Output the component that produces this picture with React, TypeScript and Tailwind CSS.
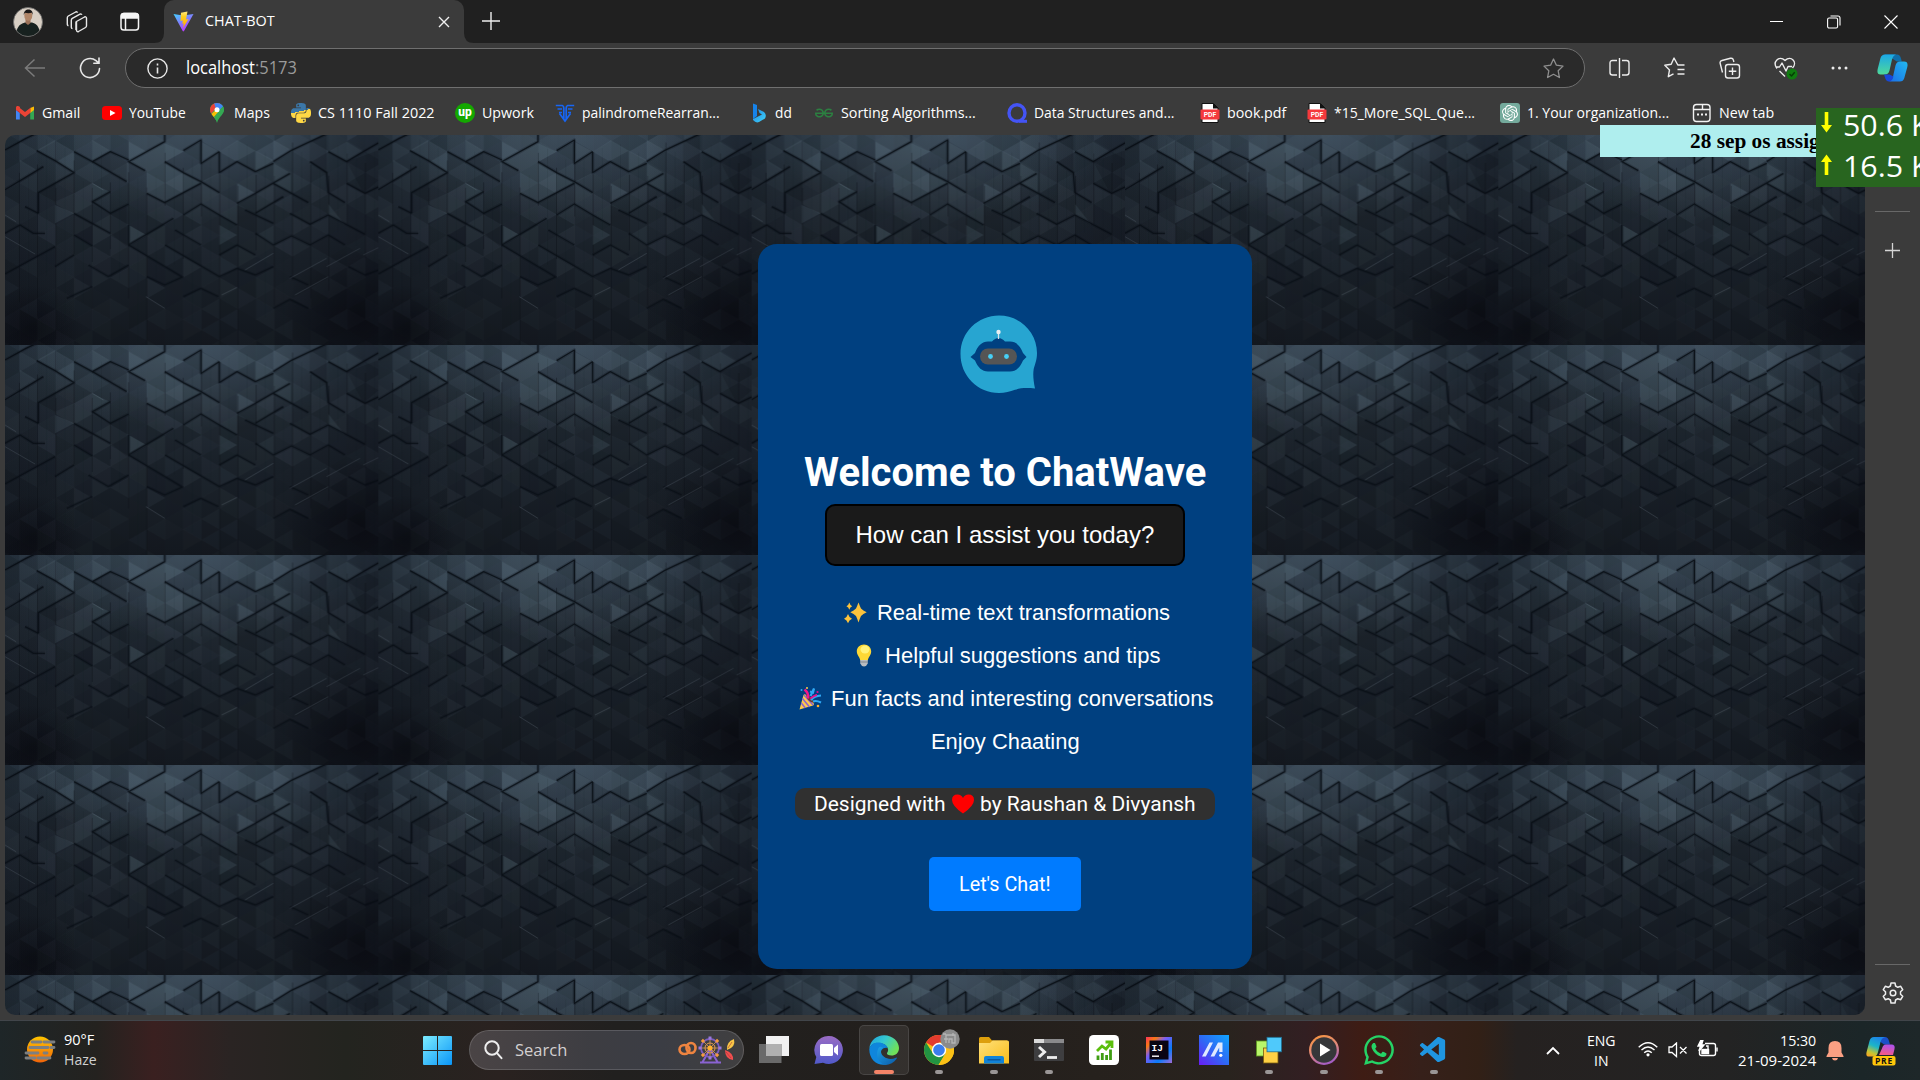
import { useLayoutEffect, useRef } from "react";
import type { ReactNode } from "react";
import { FaWhatsapp } from "react-icons/fa";
import { SiPython, SiGeeksforgeeks, SiOpenai } from "react-icons/si";
import { VscVscode } from "react-icons/vsc";

/* Single-line label condensed or widened to an exact advance width. */
function Fit({ w, className = "", children }: { w: number; className?: string; children: ReactNode }) {
  const inner = useRef<HTMLSpanElement>(null);
  useLayoutEffect(() => {
    const el = inner.current;
    if (el && el.offsetWidth) el.style.transform = `scaleX(${w / el.offsetWidth})`;
  }, [w]);
  return (
    <span className={`block shrink-0 whitespace-pre ${className}`} style={{ width: w }}>
      <span ref={inner} className="inline-block origin-left">{children}</span>
    </span>
  );
}

/* ---------- page wallpaper ---------- */

const CREASES = [
  "15,60 78,25 110,10", "10,182 130,110", "110,62 165,92 222,128 115,188 115,250", "222,65 277,95 331,65 386,90",
  "277,95 380,155", "435,122 386,95 440,65 494,35 494,10", "494,95 550,128 603,155 658,188", "440,190 494,218 603,160",
  "550,62 603,30 603,100 658,65", "658,65 658,128 711,95 766,125 820,100", "711,220 766,190 870,130",
  "820,95 873,62 930,35 980,12", "930,95 980,128 985,188 1035,218", "985,65 1040,95 1090,65 1160,25",
  "820,160 925,218", "766,250 850,200", "735,240 820,280", "331,185 277,215 331,250 386,222", "222,250 331,310",
  "75,230 115,250", "15,310 60,285 100,310 135,310", "222,315 277,348", "386,285 386,345 520,265", "550,255 603,222 658,255 711,285",
  "386,345 545,440", "525,300 603,345", "495,345 658,440 711,415 766,435 820,410", "766,310 820,345 875,318 930,345 985,315 1035,345",
  "870,250 930,283 985,255 1095,313", "658,375 711,345 766,375", "15,432 165,350", "165,410 222,375", "265,405 325,440 386,405",
  "200,505 277,470", "550,500 603,475 655,500", "440,440 494,465 550,440", "870,440 925,465", "820,535 870,508 925,535",
  "1045,410 1095,435 1137,420", "1040,160 1095,190 1137,170",
];
const GLINTS = [
  "15,255 48,275", "15,320 105,372", "980,410 1080,355", "885,495 985,440", "870,445 980,385", "438,500 494,535",
  "665,495 711,472", "1137,255 1170,275", "1090,375 1137,352", "735,420 820,370", "277,160 310,180",
];
/* Raised facets that catch the light near the top edge. */
const LIT = [
  "165,30 165,92 112,60", "277,30 277,92 331,62", "386,35 386,95 440,65", "222,65 222,125 170,95", "386,95 440,65 440,122",
  "603,35 603,100 658,65", "711,30 711,92 766,62", "658,65 711,32 711,95", "766,62 820,90 766,125", "820,30 820,90 873,60",
  "985,65 1040,35 1040,93", "1040,35 1040,93 1090,65", "494,40 494,95 550,65", "494,100 494,215 600,158", "440,65 494,38 494,215 440,188",
  "820,100 873,130 820,160", "277,160 277,215 331,187", "165,225 165,280 222,250", "60,90 60,150 110,120", "820,160 873,190 873,132",
  "386,285 386,340 435,313", "985,222 985,255 1035,285", "711,160 711,218 766,190", "658,285 658,345 711,315",
];
const SHADED = [
  "222,128 115,188 165,215 222,190", "277,95 331,65 380,95 380,155", "603,100 658,70 658,128 603,155", "930,35 980,15 980,128 930,95",
  "1040,95 1137,60 1137,150 1090,190", "331,250 380,225 380,350 331,310", "222,250 277,280 277,348 222,315", "711,225 766,250 766,310 711,285",
];
const rand = (n: number) => {
  const s = Math.sin(n * 127.1 + 11.7) * 43758.5453;
  return s - Math.floor(s);
};
const COL = 54.65;
const facets: { pts: string; light: boolean; a: number }[] = [];
for (let c = -1; c < 21; c++) {
  for (let r = -1; r < 11; r++) {
    for (let k = 0; k < 2; k++) {
      const x0 = 43 + c * COL;
      const x1 = x0 + COL;
      const y = 18 + r * 63 + (c % 2 ? 31.5 : 0) + k * 31.5;
      const v = rand(c * 53 + r * 7 + k * 3 + 400);
      facets.push({
        pts: k ? `${x0},${y + 31.5} ${x1},${y} ${x1},${y + 63}` : `${x0},${y} ${x1},${y + 31.5} ${x0},${y + 63}`,
        light: v > 0.55,
        a: Math.abs(v - 0.55) * (1 - r * 0.075) * 0.24,
      });
    }
  }
}

function Wallpaper() {
  return (
    <svg className="absolute inset-0 h-full w-full" aria-hidden="true">
      <defs>
        <linearGradient id="wpBase" x1="0" y1="0" x2="0" y2="1">
          <stop offset="0" stopColor="#2b3844" />
          <stop offset="0.3" stopColor="#222b34" />
          <stop offset="0.6" stopColor="#1a2129" />
          <stop offset="1" stopColor="#13181f" />
        </linearGradient>
        <linearGradient id="wpSide" x1="0" y1="0" x2="1" y2="0">
          <stop offset="0" stopColor="#060810" stopOpacity="0.2" />
          <stop offset="0.2" stopColor="#060810" stopOpacity="0" />
          <stop offset="0.7" stopColor="#060810" stopOpacity="0" />
          <stop offset="1" stopColor="#060810" stopOpacity="0.3" />
        </linearGradient>
        <radialGradient id="wpShine">
          <stop offset="0" stopColor="#56697a" stopOpacity="0.4" />
          <stop offset="1" stopColor="#56697a" stopOpacity="0" />
        </radialGradient>
        <radialGradient id="wpDark">
          <stop offset="0" stopColor="#07080e" stopOpacity="0.65" />
          <stop offset="1" stopColor="#07080e" stopOpacity="0" />
        </radialGradient>
        <linearGradient id="wpCrease" gradientUnits="userSpaceOnUse" x1="0" y1="0" x2="0" y2="630">
          <stop offset="0" stopColor="#060c12" stopOpacity="0.85" />
          <stop offset="1" stopColor="#060c12" stopOpacity="0.5" />
        </linearGradient>
        <pattern id="wpTile" width="373.333" height="210" patternUnits="userSpaceOnUse">
          <rect width="374" height="210" fill="url(#wpBase)" />
          <ellipse cx="190" cy="0" rx="170" ry="85" fill="url(#wpShine)" />
          <ellipse cx="28" cy="195" rx="50" ry="45" fill="url(#wpDark)" />
          <ellipse cx="355" cy="180" rx="75" ry="65" fill="url(#wpDark)" />
          <g transform="scale(0.33333)">
            {facets.map((f, i) => (
              <polygon key={i} points={f.pts} fill={f.light ? "#7f95a8" : "#03060a"} fillOpacity={f.a} />
            ))}
            {Array.from({ length: 42 }, (_, i) => (
              <path key={i} d={`M${43 + i * (COL / 2)} ${rand(i) * 160}v${150 + rand(i + 90) * 380}`} stroke="#05090e" strokeWidth={i % 2 ? 2 : 3} strokeOpacity={i % 2 ? 0.14 : 0.36} />
            ))}
          </g>
          <g transform="scale(0.33333) translate(-15 -15)" fill="none" strokeLinejoin="round">
            {LIT.map((p) => (
              <polygon key={p} points={p} fill="#7c93a6" fillOpacity="0.14" />
            ))}
            {SHADED.map((p) => (
              <polygon key={p} points={p} fill="#03060a" fillOpacity="0.17" />
            ))}
            {CREASES.map((p) => (
              <g key={p}>
                <polyline points={p} stroke="#060c12" strokeWidth="11" strokeOpacity="0.2" />
                <polyline points={p} stroke="url(#wpCrease)" strokeWidth="4" />
              </g>
            ))}
            {GLINTS.map((p) => (
              <polyline key={p} points={p} stroke="#8a99a5" strokeWidth="2" strokeOpacity="0.32" />
            ))}
          </g>
          <rect width="374" height="210" fill="url(#wpSide)" />
        </pattern>
      </defs>
      <rect width="100%" height="100%" fill="url(#wpTile)" />
    </svg>
  );
}

/* ---------- browser chrome ---------- */

function Avatar() {
  return (
    <svg width="30" height="30" viewBox="0 0 30 30">
      <defs><clipPath id="av"><circle cx="15" cy="15" r="14.5" /></clipPath></defs>
      <g clipPath="url(#av)">
        <rect width="30" height="30" fill="#d8cfc4" />
        <path d="M3 30c0-9 3-13 9-14.500h7c6 1.500 8 6 8 14.500z" fill="#17211f" />
        <path d="M12.500 12h5v4l-2.500 2-2.500-2z" fill="#9b7158" />
        <ellipse cx="15.300" cy="8.500" rx="4" ry="5.300" fill="#b08567" />
        <path d="M10.800 8c-.6-7 9.600-7.500 9 0l-1-2.200c-2.500.6-5 .4-7 0z" fill="#1b1817" />
      </g>
      <circle cx="15" cy="15" r="14.500" fill="none" stroke="#6b6b6b" strokeWidth="0.800" />
    </svg>
  );
}

function TabStrip() {
  return (
    <div className="flex h-[43px] items-stretch bg-[#202020] text-white">
      <div className="flex w-[164px] items-center pl-[13px]">
        <Avatar />
        <svg className="ml-[23px]" width="22" height="22" viewBox="0 0 22 22" fill="none" stroke="#e8e8e8" strokeWidth="1.400" strokeLinejoin="round">
          <path d="M10.500 10.500l8-4.500c1-.5 2 .1 2 1.200v7.500c0 .8-.4 1.400-1 1.800l-7 4c-1 .5-2-.1-2-1.200z" />
          <path d="M10.500 10.500q-.3 0-.5 1v7.500" />
          <path d="M6.500 17.500c-.8 0-1.200-.5-1.200-1.200V9.200c0-.8.400-1.400 1-1.800L14 3.200c.8-.4 1.600-.1 1.900.6" />
          <path d="M2.500 14.500c-.8 0-1.200-.5-1.200-1.200V6.800c0-.8.400-1.400 1-1.800L9.700 1c.8-.4 1.600-.1 1.900.6" />
        </svg>
        <svg className="ml-[32px]" width="20" height="20" viewBox="0 0 20 20" fill="none" stroke="#f5f5f5" strokeWidth="1.500">
          <rect x="1" y="1.500" width="17.500" height="16.500" rx="2.800" />
          <path d="M1.500 6V4q0-2.500 2.500-2.500h11.500q2.500 0 2.500 2.500v2z" fill="#f5f5f5" />
          <path d="M5.500 6v12" />
        </svg>
      </div>
      <div className="relative flex w-[300px] items-center rounded-t-[10px] bg-[#3b3b3b] pl-[9px]">
        <svg className="absolute -left-2.5 bottom-0" width="10" height="10"><path d="M10 0v10H0Q10 10 10 0z" fill="#3b3b3b" /></svg>
        <svg className="absolute -right-2.5 bottom-0" width="10" height="10"><path d="M0 0v10h10Q0 10 0 0z" fill="#3b3b3b" /></svg>
        <svg width="21" height="21" viewBox="0 0 21 21">
          <defs>
            <linearGradient id="vite" x1="0" y1="0" x2="0.600" y2="1"><stop stopColor="#41d1ff" /><stop offset="1" stopColor="#bd34fe" /></linearGradient>
            <linearGradient id="bolt" x1="0" y1="0" x2="0" y2="1"><stop stopColor="#ffea83" /><stop offset="0.300" stopColor="#ffcf20" /><stop offset="1" stopColor="#ffa800" /></linearGradient>
          </defs>
          <path d="M.5 3l9.500 1.500L20.500 3 11 20q-.7.900-1.300 0z" fill="url(#vite)" />
          <path d="M14.500.500L8 1.800 7.500 10l2.300-.5-.5 3.300 1.500-.4-.8 4.600L15.500 8l-2.500.5z" fill="url(#bolt)" />
        </svg>
        <Fit w={70} className="-mt-[2px] ml-[11px] text-[15px]">CHAT-BOT</Fit>
        <svg className="absolute left-[274px] top-[16px]" width="12" height="12" viewBox="0 0 12 12" stroke="#f0f0f0" strokeWidth="1.400"><path d="M1 1l10 10M11 1L1 11" /></svg>
      </div>
      <svg className="mt-[12px] ml-[18px]" width="18" height="18" viewBox="0 0 18 18" stroke="#eee" strokeWidth="1.400"><path d="M9 0v18M0 9h18" /></svg>
      <div className="ml-auto flex items-center pr-[22px]">
        <svg width="13" height="13" viewBox="0 0 13 13" stroke="#fff"><path d="M0 6.500h13" /></svg>
        <svg className="ml-[44px]" width="14" height="14" viewBox="0 0 14 14" fill="none" stroke="#fff" strokeWidth="1.100"><rect x=".6" y="3" width="10" height="10" rx="1.500" /><path d="M3.500 1h7.500q2 0 2 2v7.500" /></svg>
        <svg className="ml-[43px]" width="14" height="14" viewBox="0 0 14 14" stroke="#fff" strokeWidth="1.100"><path d="M.5.500l13 13M13.500.500L.5 13.500" /></svg>
      </div>
    </div>
  );
}

function AddressBar() {
  return (
    <div className="relative flex h-[50px] items-center bg-[#3b3b3b]">
      <svg className="ml-[24px]" width="22" height="20" viewBox="0 0 22 20" fill="none" stroke="#7b7b7b" strokeWidth="1.500"><path d="M21 10H1.500M10.500 1.500L1.500 10l9 8.500" /></svg>
      <svg className="ml-[33px]" width="22" height="22" viewBox="0 0 22 22" fill="none" stroke="#e6e6e6" strokeWidth="1.600" strokeLinecap="round"><path d="M20.500 11.500A9.500 9.500 0 1 1 17 3.700l2.500 2.100M20 1v5.200h-5.200" /></svg>
      <div className="ml-[24px] flex h-[40px] w-[1460px] items-center rounded-full border border-[#6f6f6f] bg-[#2a2a2a] pl-[21px]">
        <svg width="21" height="21" viewBox="0 0 21 21" fill="none" stroke="#e8e8e8" strokeWidth="1.400"><circle cx="10.500" cy="10.500" r="9.600" /><path d="M10.500 9.500v6M10.500 5.500v2" strokeWidth="1.600" /></svg>
        <Fit w={111} className="-mt-px ml-[18px] text-[17.500px] text-white"><span>localhost</span><span className="text-[#9a9a9a]">:5173</span></Fit>
        <svg className="mr-[20px] ml-auto" width="21" height="21" viewBox="0 0 21 21" fill="none" stroke="#8f8f8f" strokeWidth="1.300" strokeLinejoin="round"><path d="M10.500 1l2.900 6.200 6.600.9-4.800 4.700 1.200 6.700-5.900-3.200-5.900 3.200 1.200-6.700L1 8.100l6.600-.9z" /></svg>
      </div>
      <div className="flex flex-1 items-center text-[#ececec]">
        <svg className="ml-[24px] shrink-0" width="21" height="22" viewBox="0 0 21 22" fill="none" stroke="currentColor" strokeWidth="1.400"><path d="M8 3.500H3.500Q1 3.500 1 6v9.500Q1 18 3.500 18H8M13 3.500h4.500Q20 3.500 20 6v9.500q0 2.500-2.500 2.500H13M10.500 1v20" /></svg>
        <svg className="ml-[34px] shrink-0" width="22" height="22" viewBox="0 0 22 22" fill="none" stroke="currentColor" strokeWidth="1.400" strokeLinejoin="round"><path d="M20.500 8h-6.700L10 1 7.200 7.300.8 8.200l4.700 4.700-1.200 6.800 5.200-2.800M13.500 12.500h7M13.500 17h7" /></svg>
        <svg className="ml-[33px] shrink-0" width="22" height="22" viewBox="0 0 22 22" fill="none" stroke="currentColor" strokeWidth="1.400"><path d="M3.500 15.500L1.200 6.500q-.6-2.400 1.800-3l8.400-2.200q2.400-.6 3 1.800l.5 1.900" /><rect x="6.500" y="7.500" width="14" height="13.500" rx="2.500" /><path d="M13.500 10.500v7.500M9.800 14.200h7.500" /></svg>
        <svg className="ml-[33px] shrink-0" width="24" height="24" viewBox="0 0 24 24" fill="none" stroke="currentColor" strokeWidth="1.400" strokeLinejoin="round"><path d="M3 12.500C-2 6 5-1 11 4.500 17-1 24 6 18.500 12M5.500 15l5.500 5.500M1.500 11h4l2.500-4 4 8 2-4.500h4" /><circle cx="18" cy="18" r="5.500" fill="#107c10" stroke="none" /><path d="M15.500 18l2 2 3.200-3.800" stroke="#063d06" /></svg>
        <svg className="ml-[33px] shrink-0" width="17" height="4" viewBox="0 0 17 4" fill="currentColor"><circle cx="2" cy="2" r="1.500" /><circle cx="8.500" cy="2" r="1.500" /><circle cx="15" cy="2" r="1.500" /></svg>
        <svg className="ml-[29px] shrink-0" width="31" height="28" viewBox="0 0 31 28">
          <defs>
            <linearGradient id="cpA" x1="0" y1="0" x2="0" y2="1"><stop stopColor="#1ba8e8" /><stop offset="1" stopColor="#4fd99a" /></linearGradient>
            <linearGradient id="cpB" x1="1" y1="0" x2="0" y2="1"><stop stopColor="#22b8ee" /><stop offset="1" stopColor="#1a6fe8" /></linearGradient>
          </defs>
          <path d="M7 .500h13q3 0 4 4l.8 3h-5L16 5z" fill="#0f6eaa" />
          <path d="M8 .500h11q-3 1-4 5l-2.500 11q-1 4-4.500 4H3.500Q-.5 20.500.700 15L3.500 4Q4.500.500 8 .500z" fill="url(#cpA)" />
          <path d="M23 7.500h4Q31.500 7.500 30.300 13l-3 11q-1 3.500-4.500 3.500H12q3-1 4-5l2.500-11q1-4 4.500-4z" fill="url(#cpB)" />
          <path d="M7 20.500h5.500l4 2q-1.500 5-4.500 5-3 0-4-4z" fill="#1848d8" />
        </svg>
      </div>
    </div>
  );
}

const PdfIcon = () => (
  <svg width="20" height="20" viewBox="0 0 20 20">
    <path d="M2 .500h11.500L18 5v14.500H2z" fill="#fff" stroke="#111" strokeWidth="1" />
    <path d="M13 0l5.500 5.500H13z" fill="#111" />
    <rect x=".5" y="6.500" width="19" height="10" rx="1" fill="#f5393c" />
    <text x="10" y="14" textAnchor="middle" fontSize="6.800" fontWeight="700" fill="#fff" fontFamily="Roboto">PDF</text>
  </svg>
);

const BOOKMARKS: { label: string; slot: string; w: number; icon: ReactNode }[] = [
  { label: "Gmail", slot: "w-[87px]", w: 38, icon: <svg width="20" height="20" viewBox="0 0 20 20"><path d="M1 5v11.500h3.800V8z" fill="#4285f4" /><path d="M19 5v11.500h-3.800V8z" fill="#34a853" /><path d="M15.200 5L19 3.500V7l-3.800 3z" fill="#fbbc04" /><path d="M1 3.500L4.800 5v5L1 7z" fill="#c5221f" /><path d="M4.500 4.800L10 9l5.500-4.200v5L10 14 4.500 9.800zM1 5c0-2.200 2.300-2.500 4-1l-.3 5L1 7z" fill="#ea4335" /></svg> },
  { label: "YouTube", slot: "w-[105px]", w: 57, icon: <svg width="20" height="20" viewBox="0 0 20 20"><rect x="0" y="3" width="20" height="14" rx="3.500" fill="#f00" /><path d="M8 7l5.500 3L8 13z" fill="#fff" /></svg> },
  { label: "Maps", slot: "w-[84px]", w: 36, icon: <svg width="20" height="20" viewBox="0 0 20 20"><defs><clipPath id="mp"><path d="M10 0c4 0 7 3 7 6.800 0 5.200-5 6.200-7 13.200-2-7-7-8-7-13.200C3 3 6 0 10 0z" /></clipPath></defs><g clipPath="url(#mp)"><rect width="20" height="20" fill="#34a853" /><path d="M3 12L14 0H0v12z" fill="#ea4335" /><path d="M7 0h10v3L10 9z" fill="#4285f4" /><path d="M2 13l8-7 2 4-7 8z" fill="#fbbc04" /><path d="M6 15L17 2v6L8 20z" fill="#34a853" /></g><circle cx="10" cy="6.800" r="2.500" fill="#fff" /></svg> },
  { label: "CS 1110 Fall 2022", slot: "w-[164px]", w: 117, icon: <SiPython size={20} fill="url(#py)" /> },
  { label: "Upwork", slot: "w-[100px]", w: 52, icon: <svg width="20" height="20" viewBox="0 0 20 20"><circle cx="10" cy="10" r="10" fill="#14a800" /><text x="10" y="13.300" textAnchor="middle" fontSize="12" fontWeight="800" fill="#fff" fontFamily="Roboto">up</text></svg> },
  { label: "palindromeRearran...", slot: "w-[193px]", w: 138, icon: <svg width="20" height="20" viewBox="0 0 20 20" fill="none" stroke="#1765f3" strokeWidth="1.700"><path d="M.8 2.500h6.500q1.500.5 1.500 2.500v11M19.200 2.500h-6.500q-1.500.5-1.500 2.500v11M2.500 6h4.500M17.500 6h-4.500M4 9.500h3M16 9.500h-3M4.500 10.500L10 18l5.500-7.500" /></svg> },
  { label: "dd", slot: "w-[66px]", w: 17, icon: <svg width="20" height="20" viewBox="0 0 20 20"><defs><linearGradient id="bing" x1="0" y1="0" x2="1" y2="1"><stop stopColor="#1b86e8" /><stop offset="1" stopColor="#42d3f5" /></linearGradient></defs><path d="M5 .500l4 1.500v11L5 16z" fill="#1683ea" /><path d="M10 6l6 3q3 2.500 1 6.500l-6 3.500Q8 20.500 5 17v-1l9-4.500L11.500 10z" fill="url(#bing)" /></svg> },
  { label: "Sorting Algorithms...", slot: "w-[193px]", w: 135, icon: <SiGeeksforgeeks size={18} color="#2c7f41" /> },
  { label: "Data Structures and...", slot: "w-[193px]", w: 141, icon: <svg width="20" height="20" viewBox="0 0 20 20" fill="none" stroke="#4454f5" strokeWidth="3.400"><ellipse cx="10" cy="10" rx="8" ry="8.300" /><path d="M12 18.300h8" strokeWidth="3" /></svg> },
  { label: "book.pdf", slot: "w-[107px]", w: 59, icon: <PdfIcon /> },
  { label: "*15_More_SQL_Que...", slot: "w-[193px]", w: 141, icon: <PdfIcon /> },
  { label: "1. Your organization...", slot: "w-[192px]", w: 142, icon: <span className="flex h-5 w-5 items-center justify-center rounded-[3px] bg-[#74aa9c]"><SiOpenai size={16} color="#fff" /></span> },
  { label: "New tab", slot: "w-[100px]", w: 55, icon: <svg width="20" height="20" viewBox="0 0 20 20" fill="none" stroke="#f2f2f2" strokeWidth="1.400"><rect x="1.500" y="1.500" width="16.500" height="17" rx="3" /><path d="M2 6.500h16M10.500 2v4.500" /><path d="M5 11.500h2M9 11.500h2M13 11.500h2" strokeWidth="2" /></svg> },
];

function BookmarkBar() {
  return (
    <div className="flex h-[42px] items-center bg-[#3b3b3b] pb-[2px] pl-[15px] text-[14.500px] text-white">
      <svg className="absolute" width="0" height="0"><defs><linearGradient id="py" x1="0" y1="0" x2="0.250" y2="1"><stop offset="0.500" stopColor="#3b77a8" /><stop offset="0.500" stopColor="#ffd845" /></linearGradient></defs></svg>
      {BOOKMARKS.map((b) => (
        <div key={b.label} className={`flex shrink-0 items-center gap-[7px] ${b.slot}`}>
          <span className="flex h-5 w-5 shrink-0 items-center justify-center">{b.icon}</span>
          <Fit w={b.w}>{b.label}</Fit>
        </div>
      ))}
    </div>
  );
}

/* ---------- welcome card ---------- */

function BotLogo() {
  return (
    <svg className="mt-[71px] -ml-[13px]" width="78" height="78" viewBox="0 0 78 78">
      <path d="M39 .500C60 .500 77 17 77 38c0 7-2 11-3.300 16-.8 5-.5 11 1.300 19.500-9-.8-15-.4-20 1.300C50 76.500 45 78 39 78 18 78 .500 61 .500 39S18 .500 39 .500z" fill="#27a5d1" />
      <path d="M32 26.500q3-3.500 6.500-3.500t6.500 3.500h5c6 0 10 4 13 11.500l3.500 4-3.500 3.500c-3 7-7 11-13 11H28c-6 0-10-4-13-11L10.500 42l4.500-4c3-7.500 7-11.500 13-11.500z" fill="#004080" />
      <rect x="20" y="33.500" width="37" height="16" rx="8" fill="#555" />
      <circle cx="30.500" cy="41.500" r="2.400" fill="#46d0f7" /><circle cx="46.500" cy="41.500" r="2.400" fill="#46d0f7" />
      <path d="M38.500 17v7" stroke="#d8e4ea" strokeWidth="1.300" /><circle cx="38.500" cy="17" r="2.200" fill="#e9eef1" />
    </svg>
  );
}

const Sparkles = () => (
  <svg width="23" height="22" viewBox="0 0 23 22" fill="#fcc33c"><path d="M14.500.500Q15.800 4 17 6.500 19 8.500 22.700 10.300 19 12 17 14 15.800 16.500 14.500 20.500 13.200 16.500 12 14 10 12 6.300 10.300 10 8.500 12 6.500 13.200 4 14.500.500zM5.300.500Q6 3.200 8.200 4.200 6 5 5.300 7.700 4.600 5 2.400 4.200 4.600 3.200 5.300.500zM4 12Q5 15.500 8 16.700 5 17.800 4 21.300 3 17.800 0 16.700 3 15.500 4 12z" /></svg>
);
const Bulb = () => (
  <svg width="16" height="23" viewBox="0 0 16 23"><path d="M8 .500c4.200 0 7.200 3 7.200 6.800 0 3.700-2.500 5-3.500 9.200H4.300C3.300 12.300.8 11 .8 7.300.8 3.500 3.800.500 8 .500z" fill="#fdd835" /><ellipse cx="9" cy="5.500" rx="4.500" ry="4" fill="#fff27a" /><path d="M4.300 16h7.400v3.500Q10.500 22.500 8 22.500t-3.700-3z" fill="#b9bcc0" /><path d="M4.500 18h7" stroke="#80868b" /></svg>
);
const Popper = () => (
  <svg width="23" height="23" viewBox="0 0 23 23" fill="none">
    <path d="M.5 22.500L4.500 8q1-2 4 1l5 5.500q2.500 3 .5 4z" fill="#ffca4a" />
    <path d="M3.500 11.500l7 8.500M2.300 16l4 5M5 8l9 10" stroke="#8a63d2" strokeWidth="1.500" />
    <path d="M7 7.500q5 1 8 8.500-7-1-8-8.500z" fill="#6d3a2c" />
    <path d="M9 11.500Q10 6 5.500 2.500" stroke="#f2168a" strokeWidth="2.400" />
    <path d="M11.500 9L15 1.500l-1 4-3-1M12 13q3-4 10-4.500" stroke="#2fa9f5" strokeWidth="2.200" />
    <path d="M14 14.500q3-1.500 8 1" stroke="#2fa9f5" strokeWidth="2" /><path d="M11.500 11.500Q16 8 18 8" stroke="#e3128d" strokeWidth="1.800" />
    <circle cx="2.500" cy="3" r="1" fill="#2fa9f5" /><circle cx="8" cy="1" r="1" fill="#ffca4a" /><circle cx="18.500" cy="5" r="1.100" fill="#e3128d" /><circle cx="19" cy="19" r="1.300" fill="#ffb02e" />
  </svg>
);

const FEATURES: { text: string; w: number; icon?: ReactNode; pad: string }[] = [
  { text: "Real-time text transformations", w: 293, icon: <Sparkles />, pad: "gap-[10px] pl-[4px]" },
  { text: "Helpful suggestions and tips", w: 275, icon: <Bulb />, pad: "gap-[13px] pl-[6px]" },
  { text: "Fun facts and interesting conversations", w: 382, icon: <Popper />, pad: "gap-[9px] pl-[2px]" },
  { text: "Enjoy Chaating", w: 149, pad: "" },
];

function WelcomeCard() {
  return (
    <div className="relative mt-[109px] ml-[753px] flex h-[725px] w-[494px] flex-col items-center rounded-[19px] bg-[#004080] text-white">
      <BotLogo />
      <h1 className="mt-[55px] font-['Roboto'] text-[40px] leading-[50px] font-bold"><Fit w={402}>Welcome to ChatWave</Fit></h1>
      <div className="mt-[6px] flex h-[62px] w-[360px] items-center justify-center rounded-[10px] border-[2.500px] border-black bg-[#1a1a1a] font-['Liberation_Sans'] text-[24px] leading-[30px]">
        <Fit w={299}>How can I assist you today?</Fit>
      </div>
      <ul className="mt-[25px] flex flex-col items-center font-['Liberation_Sans'] text-[22.500px]">
        {FEATURES.map((f) => (
          <li key={f.text} className={`flex h-[43px] items-center ${f.pad}`}>{f.icon}<Fit w={f.w}>{f.text}</Fit></li>
        ))}
      </ul>
      <div className="mt-[25px] flex h-[32px] w-[420px] items-center justify-center rounded-[10px] bg-[#303030] font-['Roboto'] text-[20px]">
        <Fit w={132}>Designed with</Fit>
        <svg className="mx-[6px]" width="22" height="20" viewBox="0 0 22 20"><path d="M11 19.500Q0 12 0 6 0 .500 5.500.500 9.500.500 11 4 12.500.500 16.500.500 22 .500 22 6q0 6-11 13.500z" fill="#f00" /></svg>
        <Fit w={216}>by Raushan &amp; Divyansh</Fit>
      </div>
      <button className="mt-[37px] flex h-[54px] w-[152px] items-center justify-center rounded-[5px] bg-[#007bff] font-['Roboto'] text-[20px]"><Fit w={92}>Let's Chat!</Fit></button>
    </div>
  );
}

/* ---------- taskbar ---------- */

const G = ({ children }: { children: ReactNode }) => <svg width="30" height="30" viewBox="0 0 30 30">{children}</svg>;

const APPS: { name: string; icon: ReactNode; state?: "active" | "open" }[] = [
  { name: "Task view", icon: <G><rect x="7" y="1" width="23" height="20" fill="#f1f1f1" /><rect x="0" y="9" width="22.500" height="19" fill="#6a6a6a" /><rect x="7" y="9" width="15.500" height="12" fill="#b0b0b0" /></G> },
  { name: "Chat", icon: <G><defs><linearGradient id="cam" x1="0" y1="0" x2="0" y2="1"><stop stopColor="#9a6cc4" /><stop offset="1" stopColor="#5059c9" /></linearGradient></defs><path d="M15 1a14 14 0 1 1-6 26.700L.5 29l1.800-7A14 14 0 0 1 15 1z" fill="url(#cam)" /><rect x="6" y="9" width="13" height="12" rx="1.500" fill="#fff" /><path d="M20 13l4-3.500v11L20 17z" fill="#fff" /></G> },
  { name: "Edge", state: "active", icon: <G><defs><linearGradient id="eT" x1="0" y1="0" x2="1" y2="0.500"><stop stopColor="#1c9fe0" /><stop offset="0.500" stopColor="#35c8d0" /><stop offset="1" stopColor="#6fe05a" /></linearGradient><linearGradient id="eB" x1="0" y1="0" x2="1" y2="1"><stop stopColor="#1ba0e8" /><stop offset="1" stopColor="#0c59a4" /></linearGradient></defs><path d="M.3 14C1 5 8 .300 15 .300 24 .300 30 7 30 13c0 5-3.500 7.500-7.500 7.500-3 0-5-1-4.500-2.500 1-1.500 1.300-2.500 1-4C18 9.500 13 8 9 8 5 8 1.500 10 .300 14z" fill="url(#eT)" /><path d="M.3 14C1.500 9.500 5 7.500 9 7.500c5 0 9 2.500 9.800 5.500-4-1.500-7.800 2-7.800 6 0 6 5 9.500 9 9.500C11 33 0 26 .300 14z" fill="#0f86dc" /><path d="M9.500 13C6 20 9 28 16 30c5-.200 9-2.500 11.800-6.500q.5-1.500-1-.8C20 26 12.500 22 12 17q0-3 2-4.500-3-1.500-4.500.5z" fill="url(#eB)" /></G> },
  { name: "Chrome", state: "open", icon: <span className="relative block h-[30px] w-[30px]"><G><circle cx="15" cy="15" r="15" fill="#fbc116" /><path d="M15 15L2 7.500A15 15 0 0 1 28 7.500H15z" fill="#e33b2e" /><path d="M2 7.500A15 15 0 0 0 14.500 30l7-11.500L15 15 9 18.500z" fill="#229342" /><path d="M15 7.500h13A15 15 0 0 1 14.500 30l7-11.500z" fill="#fbc116" /><circle cx="15" cy="15" r="7.200" fill="#fff" /><circle cx="15" cy="15" r="5.800" fill="#3b7ded" /></G><svg className="absolute -top-1.5 left-4" width="20" height="20" viewBox="0 0 20 20"><circle cx="10" cy="10" r="9.700" fill="#8b8b8b" /><path d="M6 14V6h9v8h-3v-4H9v4M3 5h3M13 4v3M4 10h4" stroke="#b5b5b5" strokeWidth="1.300" fill="none" /></svg></span> },
  { name: "Explorer", state: "open", icon: <G><defs><linearGradient id="fo" x1="0" y1="0" x2="1" y2="1"><stop stopColor="#ffe07a" /><stop offset="1" stopColor="#f9bd1a" /></linearGradient></defs><path d="M0 3.500Q0 2 1.500 2H10l3 3.500h15V12H0z" fill="#dd9f0c" /><path d="M0 8h11l2.500-2.500H28.500Q30 5.500 30 7v21.500H0z" fill="url(#fo)" /><path d="M5 28.500V23q0-2 2-2h16q2 0 2 2v5.500z" fill="#1183d8" /><path d="M8.500 24.800h13" stroke="#0a4f93" strokeWidth="1.200" /></G> },
  { name: "Terminal", state: "open", icon: <G><rect x="0" y="4" width="30" height="22" rx="1" fill="#3e3e40" /><path d="M0 4h30v4H0z" fill="#8a8a8c" /><path d="M0 4h10v4H0z" fill="#d9d9d9" /><path d="M5 12l5.500 5L5 22" stroke="#eee" strokeWidth="3" fill="none" /><path d="M13 22.500h10" stroke="#eee" strokeWidth="2.800" /></G> },
  { name: "Analytics", icon: <G><rect width="30" height="30" rx="4.500" fill="#fff" /><path d="M8 16l5-5 4 3 5-6M16.500 7H23v6" stroke="#5cbf0e" strokeWidth="2.800" fill="none" /><path d="M9 25v-4.500M13.300 25v-7M17.600 25v-5M21.500 25V14.500" stroke="#3f9d13" strokeWidth="2.800" /></G> },
  { name: "IntelliJ IDEA", icon: <G><defs><linearGradient id="ij" x1="0" y1="0" x2="1" y2="1"><stop stopColor="#fe315d" /><stop offset="0.200" stopColor="#f97a12" /><stop offset="0.400" stopColor="#7a5cf5" /><stop offset="0.700" stopColor="#087cfa" /><stop offset="1" stopColor="#a06bd8" /></linearGradient></defs><rect x="2" y="2" width="26" height="26" fill="url(#ij)" /><rect x="5.500" y="5.500" width="19" height="19" fill="#0a0512" /><text x="7.500" y="15.500" fontSize="9.500" fontWeight="700" fill="#fff" fontFamily="Liberation Mono">IJ</text><path d="M8 21.200h7" stroke="#fff" strokeWidth="1.400" /></G> },
  { name: "MyASUS", icon: <G><defs><linearGradient id="ms" x1="0" y1="1" x2="1" y2="0"><stop stopColor="#6a1cf5" /><stop offset="0.500" stopColor="#2d6bf5" /><stop offset="1" stopColor="#0fa5ff" /></linearGradient></defs><rect width="30" height="30" fill="url(#ms)" /><path d="M3 21.500L10.500 7.500h3.500L6.800 21.500zM11.500 21.500L19 7.500h4.500V17h-3.300v-4.500L15.300 21.500z" fill="#dfe9ff" /><circle cx="21.800" cy="20.300" r="1.600" fill="#fff" /></G> },
  { name: "Sticky Notes", state: "open", icon: <G><rect x="2.500" y="6" width="15" height="15" fill="#b8f56a" stroke="#5e9a20" strokeWidth="0.800" /><rect x="9.500" y="13" width="14.500" height="15" fill="#ffd044" stroke="#7a5c10" strokeWidth="0.800" /><rect x="13" y="2.300" width="14.500" height="14.500" fill="#4fc9fb" stroke="#1f6f92" strokeWidth="0.800" /></G> },
  { name: "Media Player", state: "open", icon: <G><defs><linearGradient id="mpl" x1="0.200" y1="0" x2="0.600" y2="1"><stop stopColor="#f8953e" /><stop offset="0.500" stopColor="#e18a7a" /><stop offset="1" stopColor="#a05ac9" /></linearGradient></defs><circle cx="15" cy="15" r="15" fill="url(#mpl)" /><circle cx="15" cy="15" r="12.700" fill="#36373a" /><path d="M11 8.500l10.500 6.500L11 21.500z" fill="#fff" /></G> },
  { name: "WhatsApp", state: "open", icon: <FaWhatsapp size={34} color="#25d366" className="shrink-0" /> },
  { name: "VS Code", state: "open", icon: <VscVscode size={31} color="#1f95e0" className="shrink-0" /> },
];

function Taskbar() {
  return (
    <div className="relative flex h-[60px] border-t border-[#41454a] bg-[linear-gradient(90deg,#1e2628_0%,#24221f_5%,#3a2020_8%,#2a2423_12%,#23241f_18%,#2a2220_26%,#21201f_32%,#231f1c_50%,#29231e_64%,#321f22_68%,#3e1c14_71%,#36201a_74%,#322016_77%,#252120_79%,#232323_90%,#1b2628_97%,#1e2729_100%)] text-white">
      <div className="flex w-[423px] items-start pl-[24px]">
        <svg className="mt-[13px]" width="32" height="30" viewBox="0 0 32 30"><defs><linearGradient id="hz" x1="0" y1="0" x2="0" y2="1"><stop stopColor="#ffc400" /><stop offset="1" stopColor="#f0640a" /></linearGradient></defs><circle cx="16" cy="15.500" r="13" fill="url(#hz)" /><path d="M8 8h9M20 8h10M6 13.500h18M27 13.500h3M2 19h12M20 19h3M2 24h9M14 24h12" stroke="#7d7f80" strokeWidth="2.800" strokeLinecap="round" /></svg>
        <div className="mt-[9px] ml-[8px] flex flex-col text-[14.500px] leading-[20px]"><Fit w={30}>90°F</Fit><Fit w={33} className="text-[#d0d0d0]">Haze</Fit></div>
      </div>
      <div className="flex w-[46px] items-start pt-[15px]">
        <svg width="29" height="29" viewBox="0 0 29 29"><defs><linearGradient id="win" gradientUnits="userSpaceOnUse" x1="0" y1="0" x2="29" y2="29"><stop stopColor="#7cecff" /><stop offset="1" stopColor="#0a95f7" /></linearGradient></defs><path d="M0 1q0-1 1-1h13v14H0zM15 0h13q1 0 1 1v13H15zM0 15h14v14H1q-1 0-1-1zM15 15h14v13q0 1-1 1H15z" fill="url(#win)" /></svg>
      </div>
      <div className="mt-[9px] flex h-[40px] w-[275px] items-center rounded-full border border-white/15 bg-[linear-gradient(90deg,#4a4445,#3d3d42_45%,#3b3d44_70%,#403f40)] pl-[14px]">
        <svg width="19" height="20" viewBox="0 0 19 20" fill="none" stroke="#eee" strokeWidth="2" strokeLinecap="round"><circle cx="8" cy="8" r="6.700" /><path d="M13 13.200l4.500 5" /></svg>
        <Fit w={52} className="mt-px ml-[12px] text-[16.500px] text-[#d3d0d0]">Search</Fit>
        <svg className="ml-[111px] shrink-0" width="58" height="30" viewBox="0 0 58 30" fill="none">
          <g stroke="#ee8440" strokeWidth="2.600"><ellipse cx="6.500" cy="14.500" rx="5" ry="4.500" /><ellipse cx="13" cy="13" rx="4.500" ry="5" /></g>
          <g transform="translate(0 -1)"><path d="M32 15L24 29M32 15l8 14M22 28.500h21" stroke="#8a63d2" strokeWidth="2" /><circle cx="32" cy="14" r="9" stroke="#7a5cc0" strokeWidth="1.800" /><circle cx="32" cy="14" r="5" stroke="#f0a24c" /><path d="M32 4v20M22 14h20M25 7l14 14M39 7L25 21" stroke="#c79058" strokeWidth="0.900" /><circle cx="32" cy="14" r="2.600" fill="#ffb02e" />
            {[0, 1, 2, 3, 4, 5, 6, 7].map((i) => <rect key={i} x="30.500" y="2.500" width="3" height="3" fill={i % 2 ? "#f59a3c" : "#9a78e0"} transform={`rotate(${i * 45} 32 14)`} />)}</g>
          <path d="M49 15q-1-8 7-11 2 8-7 11z" fill="#f9c646" /><path d="M47 15q9 3 8 10-8-1-8-10z" fill="#f04e4e" /><path d="M48 17l5 6M50 13l4-6" stroke="#a33" strokeWidth="0.600" />
        </svg>
      </div>
      <div className="ml-[2px] flex">
        {APPS.map((a) => (
          <div key={a.name} className="flex w-[55px] flex-col items-center pt-[4px]">
            <div className={`flex h-[50px] w-[50px] flex-col items-center rounded-[5px] border pt-[9px] ${a.state === "active" ? "border-white/10 bg-white/8" : "border-transparent"}`}>
              <span className="flex h-[30px] w-[30px] items-center justify-center">{a.icon}</span>
              {a.state && <span className={`mt-[5px] h-[4px] shrink-0 rounded-full ${a.state === "active" ? "w-[20px] bg-[#f48468]" : "w-[8px] bg-[#9a9696]"}`} />}
            </div>
          </div>
        ))}
      </div>
      <div className="ml-auto flex items-start pr-[24px] text-[15px] leading-[20px]">
        <svg className="mt-[25px]" width="14" height="9" viewBox="0 0 14 9" fill="none" stroke="#fff" strokeWidth="1.800"><path d="M1 8l6-6 6 6" /></svg>
        <div className="mt-[9px] ml-[26px] flex w-[30px] flex-col items-center"><Fit w={29}>ENG</Fit><Fit w={14}>IN</Fit></div>
        <svg className="mt-[20px] ml-[22px]" width="20" height="16" viewBox="0 0 20 16" fill="none" stroke="#fff" strokeWidth="1.400"><path d="M.7 6.200q9.300-9 18.600 0M3.500 9q6.500-6 13 0M6.200 11.800q3.800-3.500 7.600 0" /><circle cx="10" cy="13.800" r="1.600" fill="#fff" stroke="none" /></svg>
        <svg className="mt-[21px] ml-[10px]" width="20" height="16" viewBox="0 0 20 16" fill="none" stroke="#fff" strokeWidth="1.300"><path d="M1 5h3l4.500-4v13.500l-4.500-4H1zM12 5l6.500 6.500M18.500 5L12 11.500" /></svg>
        <svg className="mt-[19px] ml-[9px]" width="22" height="18" viewBox="0 0 22 18" fill="none" stroke="#fff" strokeWidth="1.400"><path d="M8 3.500h8.500q2 0 2 2v8q0 2-2 2h-12q-2 0-2-2V9" /><rect x="5" y="9.500" width="6.500" height="4" fill="#fff" /><path d="M9 6h2v5" /><path d="M4 0L1 6h2.500L2 11l5-6H4.500L6 0zM20 7.500v4" fill="#fff" /></svg>
        <div className="mt-[9px] ml-[18px] flex w-[79px] flex-col items-end"><Fit w={36}>15:30</Fit><Fit w={78}>21-09-2024</Fit></div>
        <svg className="mt-[20px] ml-[10px]" width="18" height="20" viewBox="0 0 18 20" fill="#fba083"><path d="M9 0q6.500 0 6.500 7v4.500l2 3.500v1H.5v-1l2-3.500V7Q2.500 0 9 0zM6 17h6q-.5 2.500-3 2.500T6 17z" /></svg>
        <svg className="mt-[16px] ml-[22px]" width="30" height="29" viewBox="0 0 30 29"><defs><linearGradient id="pa" x1="0.600" y1="0" x2="0.200" y2="1"><stop stopColor="#1c84e8" /><stop offset="0.450" stopColor="#1cb5c8" /><stop offset="0.800" stopColor="#c6c532" /><stop offset="1" stopColor="#f5a623" /></linearGradient><linearGradient id="pb" x1="0.500" y1="0" x2="0.200" y2="1"><stop stopColor="#b052ea" /><stop offset="1" stopColor="#f85a80" /></linearGradient></defs><path d="M8 0h11q3 0 4 4l1 3.500h-6z" fill="#1b50c8" /><path d="M8 0h11q-3.500 1-4.500 5L12 15q-1 4.500-4.500 4.500H3Q-.5 19.500.6 15L3.500 4Q4.500 0 8 0z" fill="url(#pa)" /><path d="M20 7.500h5.500q4 0 3 4.500L27 18H13l3-6.500q1-4 4-4z" fill="url(#pb)" /><rect x="6.500" y="19" width="23" height="9.500" rx="2" fill="#ffc70a" /><text x="18" y="26.700" textAnchor="middle" fontSize="8.500" fontWeight="700" fill="#111" fontFamily="Open Sans" letterSpacing="0.800">PRE</text></svg>
      </div>
    </div>
  );
}

/* ---------- always-on-top desktop widgets ---------- */

function StickyAndNetMeter() {
  return (
    <div className="absolute top-[108px] right-0 h-[79px] w-[320px] overflow-hidden">
      <div className="absolute top-[17px] left-0 h-[32px] w-[260px] bg-[#afeeee] pl-[90px] font-['Liberation_Serif'] text-[20.500px] leading-[33px] font-bold text-black"><Fit w={130}>28 sep os assig</Fit></div>
      <div className="absolute top-0 right-0 flex h-[79px] w-[104px] flex-col bg-[#28651f] text-[30px] text-white">
        {["50.6 K", "16.5 K"].map((t, i) => (
          <div key={t} className={`flex items-start pl-[5px] ${i ? "h-[38px]" : "h-[41px]"}`}>
            <svg className={`shrink-0 ${i ? "mt-[5px] rotate-180" : "mt-[4px]"}`} width="11" height="21" viewBox="0 0 11 21" fill="#ff0"><path d="M3.700 0h3.600v13H11l-5.500 7.500L0 13h3.700z" /></svg>
            <Fit w={87} className="ml-[11px] leading-[34px]">{t}</Fit>
          </div>
        ))}
      </div>
    </div>
  );
}

export default function App() {
  return (
    <div className="relative flex h-[1080px] w-[1920px] flex-col overflow-hidden bg-[#3b3b3b] font-['Open_Sans',sans-serif]">
      <TabStrip />
      <AddressBar />
      <BookmarkBar />
      <div className="flex h-[885px]">
        <main className="relative ml-[5px] h-[880px] w-[1860px] overflow-hidden rounded-[10px]">
          <Wallpaper />
          <WelcomeCard />
        </main>
        <aside className="flex w-[55px] flex-col items-center">
          <div className="mt-[76px] h-px w-[35px] bg-[#686868]" />
          <svg className="mt-[31px]" width="15" height="15" viewBox="0 0 15 15" stroke="#d5d5d5" strokeWidth="1.300"><path d="M7.500 0v15M0 7.500h15" /></svg>
          <div className="mt-auto h-px w-[35px] bg-[#686868]" />
          <svg className="mt-[17px] mb-[16px]" width="22" height="22" viewBox="0 0 22 22" fill="none" stroke="#eee" strokeWidth="1.500" strokeLinejoin="round"><path d="M9 1h4l.6 3 2.200 1.300 2.900-1 2 3.400L18.500 9.700v2.600l2.200 2-2 3.400-2.900-1-2.200 1.300-.6 3H9l-.6-3-2.200-1.300-2.900 1-2-3.400 2.200-2V9.700l-2.200-2 2-3.400 2.900 1L8.400 4z" /><circle cx="11" cy="11" r="2.800" /></svg>
        </aside>
      </div>
      <Taskbar />
      <StickyAndNetMeter />
    </div>
  );
}
